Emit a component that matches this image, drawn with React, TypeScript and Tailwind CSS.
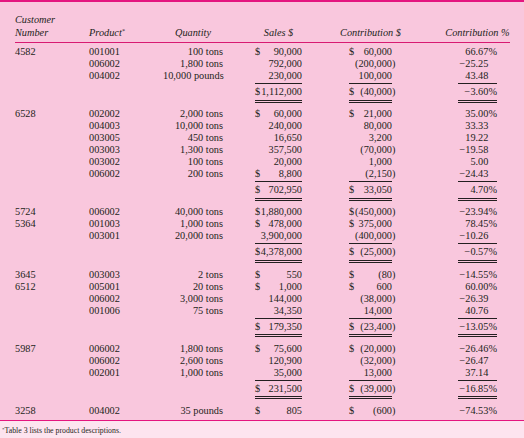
type Row = {
  cust?: string;
  prod: string;
  qty: string;
  sd?: boolean;
  sales: string;
  cd?: boolean;
  contr: string;
  pct: string;
};

type Total = { sd: boolean; sales: string; cd: boolean; contr: string; pct: string };

type Group = { rows: Row[]; total?: Total };

const groups: Group[] = [
  {
    rows: [
      { cust: "4582", prod: "001001", qty: "100 tons", sd: true, sales: "90,000", cd: true, contr: "60,000", pct: "66.67%" },
      { prod: "006002", qty: "1,800 tons", sales: "792,000", contr: "(200,000)", pct: "\u221225.25" },
      { prod: "004002", qty: "10,000 pounds", sales: "230,000", contr: "100,000", pct: "43.48" },
    ],
    total: { sd: true, sales: "1,112,000", cd: true, contr: "(40,000)", pct: "\u22123.60%" },
  },
  {
    rows: [
      { cust: "6528", prod: "002002", qty: "2,000 tons", sd: true, sales: "60,000", cd: true, contr: "21,000", pct: "35.00%" },
      { prod: "004003", qty: "10,000 tons", sales: "240,000", contr: "80,000", pct: "33.33" },
      { prod: "003005", qty: "450 tons", sales: "16,650", contr: "3,200", pct: "19.22" },
      { prod: "003003", qty: "1,300 tons", sales: "357,500", contr: "(70,000)", pct: "\u221219.58" },
      { prod: "003002", qty: "100 tons", sales: "20,000", contr: "1,000", pct: "5.00" },
      { prod: "006002", qty: "200 tons", sd: true, sales: "8,800", contr: "(2,150)", pct: "\u221224.43" },
    ],
    total: { sd: true, sales: "702,950", cd: true, contr: "33,050", pct: "4.70%" },
  },
  {
    rows: [
      { cust: "5724", prod: "006002", qty: "40,000 tons", sd: true, sales: "1,880,000", cd: true, contr: "(450,000)", pct: "\u221223.94%" },
      { cust: "5364", prod: "001003", qty: "1,000 tons", sd: true, sales: "478,000", cd: true, contr: "375,000", pct: "78.45%" },
      { prod: "003001", qty: "20,000 tons", sales: "3,900,000", contr: "(400,000)", pct: "\u221210.26" },
    ],
    total: { sd: true, sales: "4,378,000", cd: true, contr: "(25,000)", pct: "\u22120.57%" },
  },
  {
    rows: [
      { cust: "3645", prod: "003003", qty: "2 tons", sd: true, sales: "550", cd: true, contr: "(80)", pct: "\u221214.55%" },
      { cust: "6512", prod: "005001", qty: "20 tons", sd: true, sales: "1,000", cd: true, contr: "600", pct: "60.00%" },
      { prod: "006002", qty: "3,000 tons", sales: "144,000", contr: "(38,000)", pct: "\u221226.39" },
      { prod: "001006", qty: "75 tons", sales: "34,350", contr: "14,000", pct: "40.76" },
    ],
    total: { sd: true, sales: "179,350", cd: true, contr: "(23,400)", pct: "\u221213.05%" },
  },
  {
    rows: [
      { cust: "5987", prod: "006002", qty: "1,800 tons", sd: true, sales: "75,600", cd: true, contr: "(20,000)", pct: "\u221226.46%" },
      { prod: "006002", qty: "2,600 tons", sales: "120,900", contr: "(32,000)", pct: "\u221226.47" },
      { prod: "002001", qty: "1,000 tons", sales: "35,000", contr: "13,000", pct: "37.14" },
    ],
    total: { sd: true, sales: "231,500", cd: true, contr: "(39,000)", pct: "\u221216.85%" },
  },
  {
    rows: [
      { cust: "3258", prod: "004002", qty: "35 pounds", sd: true, sales: "805", cd: true, contr: "(600)", pct: "\u221274.53%" },
    ],
  },
];

function Money({ d, v }: { d?: boolean; v: string }) {
  const paren = v.endsWith(")");
  return (
    <div className="flex justify-between">
      <span>{d ? "$" : ""}</span>
      <span>
        {paren ? v.slice(0, -1) : v}
        {paren && <span className="-mr-[3.4px]">)</span>}
      </span>
    </div>
  );
}

function Pct({ v }: { v: string }) {
  const has = v.endsWith("%");
  return (
    <div className="flex justify-end">
      <span>{has ? v.slice(0, -1) : v}</span>
      <span className="w-[8.6px]">{has ? "%" : ""}</span>
    </div>
  );
}

function DataRow({ r }: { r: Row }) {
  return (
    <div className="flex pl-[15px] leading-[12px]">
      <div className="w-[74px]">{r.cust}</div>
      <div className="w-[74px]">{r.prod}</div>
      <div className="w-[60px] text-right whitespace-nowrap">{r.qty}</div>
      <div className="ml-[32px] w-[47px]">
        <Money d={r.sd} v={r.sales} />
      </div>
      <div className="ml-[47px] w-[43px]">
        <Money d={r.cd} v={r.contr} />
      </div>
      <div className="ml-[66px] w-[39px]">
        <Pct v={r.pct} />
      </div>
    </div>
  );
}

function TotalRow({ t }: { t: Total }) {
  const rule = "border-t border-b-[3px] border-double border-[#231f20] pt-[2px] pb-[1.5px]";
  return (
    <div className="flex pl-[15px] leading-[12px] mt-[1px] mb-[5.7px]">
      <div className="w-[208px]" />
      <div className={`ml-[32px] w-[47px] ${rule}`}>
        <Money d={t.sd} v={t.sales} />
      </div>
      <div className={`ml-[47px] w-[43px] ${rule}`}>
        <Money d={t.cd} v={t.contr} />
      </div>
      <div className={`ml-[66px] w-[39px] ${rule}`}>
        <Pct v={t.pct} />
      </div>
    </div>
  );
}

export default function App() {
  return (
    <div className="min-h-screen w-full flex flex-col bg-[#f9c7dd] text-[#231f20] font-['Liberation_Serif',serif] text-[10.3px]">
      <div className="h-[2px] bg-[#e4157f]" />

      <div className="flex items-end pl-[15px] pt-[10.5px] pb-[3.5px] italic leading-[13px]">
        <div className="w-[74px]">
          Customer
          <br />
          Number
        </div>
        <div className="w-[74px]">
          Product<sup className="text-[6px]">*</sup>
        </div>
        <div className="w-[60px] flex justify-center whitespace-nowrap">Quantity</div>
        <div className="ml-[32px] w-[47px] flex justify-center whitespace-nowrap">Sales $</div>
        <div className="ml-[47px] w-[43px] flex justify-center whitespace-nowrap">Contribution $</div>
        <div className="ml-[66px] w-[39px] flex justify-center whitespace-nowrap">Contribution %</div>
      </div>
      <div className="ml-[15px] w-[495px] h-[1px] bg-[#d81b72]" />

      <div className="pt-[3px] pb-[3px]">
        {groups.map((g, i) => (
          <div key={i}>
            {g.rows.map((r, j) => (
              <DataRow key={j} r={r} />
            ))}
            {g.total && <TotalRow t={g.total} />}
          </div>
        ))}
      </div>

      <div className="h-[1.5px] bg-[#e4157f]" />
      <div className="flex-1 bg-[#fde4ef] pl-[2px] pt-[5px] pb-[2px] text-[7.8px] leading-[10px]">
        <sup className="text-[5px]">*</sup>Table 3 lists the product descriptions.
      </div>
    </div>
  );
}
